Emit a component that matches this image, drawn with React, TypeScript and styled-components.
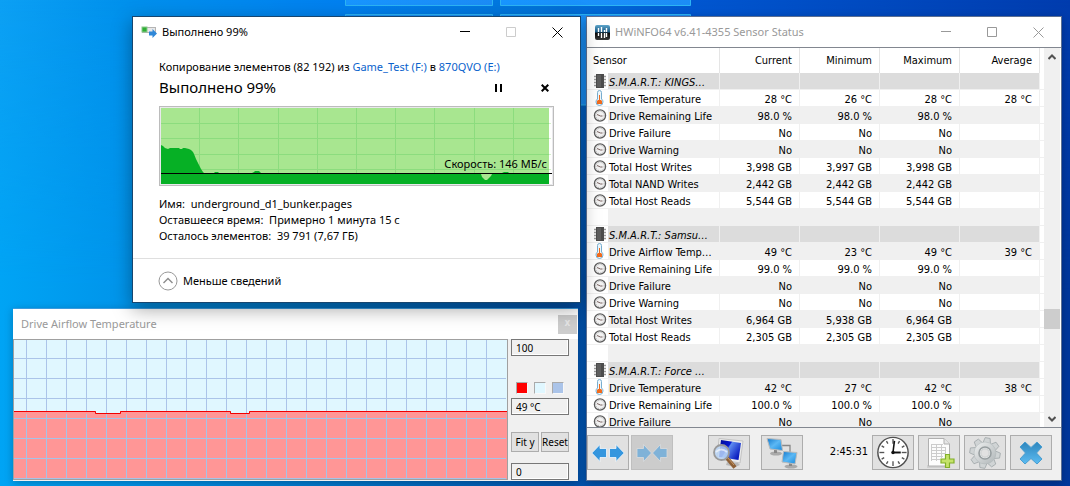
import React from 'react';
import styled, { createGlobalStyle, css } from 'styled-components';

const UI_FONT = '"Segoe UI", "Noto Sans", sans-serif';
const LIST_FONT = 'Tahoma, "DejaVu Sans Condensed", sans-serif';

const GlobalStyle = createGlobalStyle`
  *, *::before, *::after { box-sizing: border-box; }
  body { margin: 0; font: 11px/16px ${UI_FONT}; color: #000; }
  button, input { font: inherit; color: inherit; }
`;

const Desktop = styled.main`
  position: relative;
  isolation: isolate;
  display: grid;
  grid-template-columns: 568px minmax(440px, 1fr);
  gap: 5px;
  height: 100vh;
  min-height: 480px;
  padding: 16px 8px 5px 13px;
  overflow: hidden;
`;

const WallpaperArt = styled.svg`
  position: absolute;
  inset: 0;
  z-index: -1;
  width: 100%;
  height: 100%;
`;

const LeftColumn = styled.div`
  display: flex;
  flex-direction: column;
  gap: 5px;
  min-height: 0;
`;

const Window = styled.section`
  display: flex;
  flex-direction: column;
  min-width: 0;
  min-height: 0;
  background: #fff;
`;

const CopyWindow = styled(Window)`
  position: relative;
  z-index: 2;
  align-self: flex-end;
  width: 449px;
  border: 1px solid #17466f;
  box-shadow: 0 6px 18px rgba(0, 0, 0, 0.36);
`;

const GraphWindow = styled(Window)`
  flex: 1;
  margin-right: 3px;
  border-top: 1px solid #3a9ade;
  box-shadow: 0 2px 8px rgba(0, 0, 0, 0.25);
`;

const SensorWindow = styled(Window)`
  border: 1px solid #5b6f92;
  box-shadow: 0 2px 8px rgba(0, 0, 0, 0.25);
`;

const TitleBar = styled.header<{ $inactive?: boolean }>`
  display: flex;
  flex: none;
  align-items: center;
  height: 30px;
  padding-left: 8px;
  color: ${p => (p.$inactive ? '#999' : '#000')};
`;

const Title = styled.h1`
  flex: 1;
  margin: 0;
  font-size: 11px;
  font-weight: 400;
  white-space: nowrap;
`;

const TitleIcon = styled.svg`
  flex: none;
  margin-right: 5px;
`;

const CaptionButton = styled.button<{ $faded?: boolean }>`
  display: grid;
  place-items: center;
  width: 46px;
  height: 30px;
  padding: 0;
  border: 0;
  background: none;
  color: ${p => (p.$faded ? '#ccc' : 'inherit')};
`;

const CopyBody = styled.div`
  padding: 12px 26px 14px;
`;

const Line = styled.p`
  margin: 0;
  white-space: pre;
`;

const DriveLink = styled.a`
  color: #0a62cc;
  text-decoration: none;
`;

const ProgressRow = styled.div`
  display: flex;
  align-items: center;
  height: 20px;
  margin: 2px 0 9px;
`;

const ProgressTitle = styled.h2`
  flex: 1;
  margin: 0;
  font-size: 15px;
  line-height: 20px;
  font-weight: 400;
`;

const IconButton = styled.button`
  display: grid;
  place-items: center;
  width: 18px;
  height: 20px;
  padding: 2px 0 0;
  border: 0;
  background: none;
  & + & { margin-left: 29px; }
`;

const SpeedChart = styled.div`
  position: relative;
  height: 80px;
  margin-bottom: 10px;
  svg { display: block; width: 100%; height: 100%; }
`;

const SpeedLabel = styled.span`
  position: absolute;
  top: 50px;
  right: 7px;
`;

const CopyFooter = styled.footer`
  display: flex;
  align-items: center;
  height: 44px;
  padding: 1px 0 0 25px;
  border-top: 1px solid #dfdfdf;
`;

const DetailsButton = styled.button`
  display: flex;
  align-items: center;
  gap: 5px;
  padding: 0;
  border: 0;
  background: none;
`;

const GraphClose = styled.button`
  width: 19px;
  height: 19px;
  margin-right: 1px;
  padding: 0 0 2px;
  border: 0;
  background: #cdcdcd;
  color: #e6e6e6;
  font: bold 10px/16px ${LIST_FONT};
`;

const GraphBody = styled.div`
  display: flex;
  flex: 1;
  min-height: 0;
  padding-bottom: 1px;
  background: #f0f0f0;
`;

const Plot = styled.svg`
  flex: 1;
  min-width: 0;
  height: 100%;
`;

const GraphPanel = styled.div`
  display: flex;
  flex-direction: column;
  justify-content: space-between;
  width: 70px;
  padding: 0 9px 0 3px;
  font-size: 10px;
`;

const PanelGroup = styled.div`
  display: flex;
  flex-direction: column;
  gap: 4px;
  margin-top: 15px;
`;

const ButtonPair = styled.div`
  display: flex;
  gap: 2px;
  margin-top: 6px;
`;

const ValueBox = styled.input`
  width: 58px;
  height: 17px;
  padding: 0 4px;
  border: 1px solid #777;
  background: #f0f0f0;
  box-shadow: inset -1px -1px #fff;
  line-height: 15px;
`;

const Swatches = styled.div`
  display: flex;
  gap: 6px;
  padding-left: 5px;
`;

const Swatch = styled.button<{ $color: string }>`
  width: 12px;
  height: 12px;
  padding: 0;
  border: 1px solid #aaa;
  border-right-color: #f8f8f8;
  border-bottom-color: #f8f8f8;
  background: ${p => p.$color};
`;

const SmallButton = styled.button`
  flex: 1;
  height: 20px;
  padding: 0;
  border: 1px solid #adadad;
  background: #e1e1e1;
  line-height: 16px;
`;

const ListArea = styled.div`
  display: flex;
  flex: 1;
  min-height: 0;
  border-top: 1px solid #828790;
  border-bottom: 1px solid #828790;
  overflow: hidden;
  font: 11px/16px ${LIST_FONT};
`;

const TableClip = styled.div`
  flex: 1;
  min-width: 0;
  overflow: hidden;
`;

const SensorTable = styled.table`
  width: 100%;
  table-layout: fixed;
  border-collapse: separate;
  border-spacing: 0;
`;

const IconCol = styled.col` width: 21px; `;
const NameCol = styled.col` width: 112px; `;
const EndCol = styled.col` width: 4px; `;

const HeadCell = styled.th<{ $left?: boolean }>`
  height: 25px;
  padding: ${p => (p.$left ? '1px 0 0 6px' : '1px 7px 0 0')};
  border-right: 1px solid #e5e5e5;
  font-weight: 400;
  text-align: ${p => (p.$left ? 'left' : 'right')};
`;

const cell = css`
  height: 17px;
  padding: 0;
  border-bottom: 1px solid #f0f0f0;
  white-space: nowrap;
`;

const IconCell = styled.td`
  ${cell}
  padding-left: 6px;
  svg { display: block; overflow: visible; }
`;

const EndCell = styled.td` ${cell} `;

const NameCell = styled.td`
  ${cell}
  padding: 4px 0 0 1px;
  border-right: 1px solid #f0f0f0;
  line-height: 12px;
  overflow: hidden;
`;

const ValueCell = styled.td`
  ${cell}
  padding: 4px 7px 0 0;
  border-right: 1px solid #f0f0f0;
  line-height: 12px;
  text-align: right;
`;

const SensorRow = styled.tr<{ $tone: 'group' | 'odd' | 'even' }>`
  ${NameCell}, ${ValueCell} {
    background: ${p => ({ group: '#dcdcdc', odd: '#fff', even: '#f0f0f0' })[p.$tone]};
    font-style: ${p => (p.$tone === 'group' ? 'italic' : 'normal')};
  }
`;

const ScrollTrack = styled.div`
  display: flex;
  flex-direction: column;
  flex: none;
  width: 16px;
  margin-right: 1px;
  background: #f0f0f0;
`;

const ScrollArrow = styled.button`
  display: grid;
  place-items: center;
  height: 17px;
  padding: 0;
  border: 0;
  background: none;
`;

const ScrollSpace = styled.div<{ $grow: number }>` flex: ${p => p.$grow}; `;
const ScrollThumb = styled.div` height: 20px; background: #cdcdcd; `;

const Toolbar = styled.footer`
  display: flex;
  flex: none;
  height: 52px;
  padding: 7px 9px 0 0;
  background: #f0f0f0;
`;

const ToolGroup = styled.div<{ $gap: number; $offset?: string }>`
  display: flex;
  gap: ${p => p.$gap}px;
  margin-left: ${p => p.$offset ?? '0'};
`;

const ToolButton = styled.button`
  display: grid;
  place-items: center;
  width: 42px;
  height: 35px;
  padding: 0;
  border: 1px solid #adadad;
  background: #e1e1e1;
  &:disabled { background: #ccc; border-color: #bfbfbf; }
`;

const Clock = styled.time`
  font: 11px/34px ${LIST_FONT};
`;

function Wallpaper() {
  return (
    <WallpaperArt viewBox="0 0 1070 486" preserveAspectRatio="none" aria-hidden="true">
      <defs>
        <linearGradient id="sky">
          <stop offset="0" stopColor="#0ca0f4" />
          <stop offset=".12" stopColor="#0090ec" />
          <stop offset=".33" stopColor="#0080f0" />
          <stop offset=".5" stopColor="#0076dc" />
          <stop offset=".65" stopColor="#0056d0" />
          <stop offset="1" stopColor="#003cae" />
        </linearGradient>
        <linearGradient id="ground">
          <stop offset="0" stopColor="#00a4f4" />
          <stop offset=".12" stopColor="#0094ea" />
          <stop offset=".33" stopColor="#0074c8" />
          <stop offset=".54" stopColor="#0052ac" />
          <stop offset="1" stopColor="#00379c" />
        </linearGradient>
        <linearGradient id="fade" x2="0" y2="1">
          <stop offset="0" stopColor="#fff" stopOpacity="0" />
          <stop offset=".6" stopColor="#fff" />
        </linearGradient>
        <linearGradient id="pane" x2="1">
          <stop offset="0" stopColor="#1896ff" />
          <stop offset="1" stopColor="#1c8cf6" />
        </linearGradient>
        <mask id="lower"><rect width="1070" height="486" fill="url(#fade)" /></mask>
      </defs>
      <rect width="1070" height="486" fill="url(#sky)" />
      <rect width="1070" height="486" fill="url(#ground)" mask="url(#lower)" />
      <g fill="url(#pane)" stroke="#2cb4f4" strokeWidth="1">
        <path d="M345.500-2V5.500H492.500V-2Z" />
        <path d="M500.500-2V5.500H690.500V-2Z" />
        <path d="M345.500 200V14.500H492.500V200Z" />
        <path d="M500.500 105V14.500H690.500V105Z" />
      </g>
    </WallpaperArt>
  );
}

function CaptionButtons({ maxFaded }: { maxFaded?: boolean }) {
  return (
    <>
      <CaptionButton aria-label="Minimize">
        <svg width="10" height="10"><path d="M0 4.500H10" stroke="currentColor" /></svg>
      </CaptionButton>
      <CaptionButton aria-label="Maximize" $faded={maxFaded}>
        <svg width="10" height="10"><path d="M.5.5h9v9h-9z" fill="none" stroke="currentColor" /></svg>
      </CaptionButton>
      <CaptionButton aria-label="Close">
        <svg width="11" height="11"><path d="M.5.5l10 10M10.500.5l-10 10" stroke="currentColor" /></svg>
      </CaptionButton>
    </>
  );
}

function SpeedPlot() {
  const columns = [40, 79, 119, 158, 197, 236, 275, 315, 354];
  const rows = [17, 32, 48, 63];
  return (
    <svg viewBox="0 0 395 80" preserveAspectRatio="none" aria-hidden="true">
      <rect x=".5" y=".5" width="394" height="79" fill="#fff" stroke="#bcbcbc" />
      <path d="M1.500 78.500V1.500H393.500V78.500Z" fill="none" stroke="#e9e9ec" />
      <rect x="2" y="2" width="388" height="76" fill="#a8e690" />
      {rows.map(y => <path key={y} d={`M390 ${y}.5H392`} stroke="#d3f2c8" />)}
      {rows.map(y => <path key={y} d={`M2 ${y}.5H390`} stroke="#8cdc7e" />)}
      {columns.map(x => <path key={x} d={`M${x}.5 2V78`} stroke="#8cdc7e" />)}
      <path
        d="M2 78V39l2 1 2 2 3 1 2-1h9l1 1h2l1-1h2l4 1 2 1 2 2 1 2 2 5 3 6 2 4 2 3 1 1H55l1-1h3l1 1H93l2-1 1-1h4l1 1 1 1H343l2-1h4l1 1H390V78Z"
        fill="#06b025"
      />
      <path d="M322 68h11l-1 2-4 4h-2l-3-3Z" fill="#a8e690" />
      <path d="M2 67.500H393" stroke="#000" />
    </svg>
  );
}

function TemperaturePlot() {
  const xs = Array.from({ length: 24 }, (_, i) => 13 + i * 20);
  const ys = Array.from({ length: 7 }, (_, i) => 19 + i * 20);
  return (
    <Plot viewBox="0 0 495 141" preserveAspectRatio="none" role="img" aria-label="Drive Airflow Temperature">
      <rect x=".5" y=".5" width="494" height="140" fill="#e0f7ff" />
      {xs.map(x => <path key={x} d={`M${x}.5 1V140`} stroke="#abc4e9" />)}
      {ys.map(y => <path key={y} d={`M1 ${y}.5H493`} stroke="#abc4e9" />)}
      <path d="M1 140V72H83V74H107V72H218V74H236V72H494V140Z" fill="#ff9696" />
      {xs.map(x => <path key={x} d={`M${x}.5 75V140`} stroke="#a5c3e8" />)}
      {ys.slice(3).map(y => <path key={y} d={`M1 ${y}.5H493`} stroke="#a5c3e8" />)}
      <path d="M1 72.500H82.500V74.500H107.500V72.500H217.500V74.500H236.500V72.500H494" fill="none" stroke="#f00000" />
      <rect x=".5" y=".5" width="494" height="140" fill="none" stroke="#a0a0a0" />
    </Plot>
  );
}

type IconKind = 'chip' | 'thermometer' | 'gauge';

function SensorIcon({ kind }: { kind: IconKind }) {
  if (kind === 'chip') {
    return (
      <svg width="14" height="16" viewBox="0 -1 14 16" aria-hidden="true">
        <path d="M1 2.500h12M1 5.500h12M1 8.500h12M1 11.500h12" stroke="#9a9a9a" strokeWidth="1.600" />
        <rect x="3" y="0" width="8" height="14" fill="#4c4c4c" />
        <path d="M4 1h4v12H4z" fill="#5e5e5e" />
      </svg>
    );
  }
  if (kind === 'thermometer') {
    return (
      <svg width="14" height="16" viewBox="0 0 14 16" aria-hidden="true">
        <path d="M4.500 9V2.500q0-2 2-2t2 2V9q1.500 1 1.500 3 0 3.500-3.500 3.500T3 12q0-2 1.500-3Z" fill="#eef7fc" stroke="#78aed0" />
        <path d="M6 5h1v5h1l1 1v3H4v-3l1-1h1Z" fill="#f26b1d" />
      </svg>
    );
  }
  return (
    <svg width="14" height="16" viewBox="0 -1 14 16" aria-hidden="true">
      <circle cx="7" cy="7.500" r="5.600" fill="#f2f2f2" stroke="#5c5c5c" strokeWidth="1.300" />
      <circle cx="7" cy="7.500" r="4.200" fill="none" stroke="#aaa" strokeDasharray="1 1.500" />
      <path d="M4 6.500l3.500 1.500h2" fill="none" stroke="#7b6563" />
    </svg>
  );
}

type Row = { icon?: IconKind; name: string; values?: string[] };

const temp = (name: string, ...values: string[]): Row => ({ icon: 'thermometer', name, values });
const stat = (name: string, ...values: string[]): Row => ({ icon: 'gauge', name, values });
const group = (name: string): Row => ({ icon: 'chip', name });
const blank: Row = { name: '' };

const rows: Row[] = [
  group('S.M.A.R.T.: KINGS…'),
  temp('Drive Temperature', '28 °C', '26 °C', '28 °C', '28 °C'),
  stat('Drive Remaining Life', '98.0 %', '98.0 %', '98.0 %'),
  stat('Drive Failure', 'No', 'No', 'No'),
  stat('Drive Warning', 'No', 'No', 'No'),
  stat('Total Host Writes', '3,998 GB', '3,997 GB', '3,998 GB'),
  stat('Total NAND Writes', '2,442 GB', '2,442 GB', '2,442 GB'),
  stat('Total Host Reads', '5,544 GB', '5,544 GB', '5,544 GB'),
  blank,
  group('S.M.A.R.T.: Samsu…'),
  temp('Drive Airflow Temp…', '49 °C', '23 °C', '49 °C', '39 °C'),
  stat('Drive Remaining Life', '99.0 %', '99.0 %', '99.0 %'),
  stat('Drive Failure', 'No', 'No', 'No'),
  stat('Drive Warning', 'No', 'No', 'No'),
  stat('Total Host Writes', '6,964 GB', '5,938 GB', '6,964 GB'),
  stat('Total Host Reads', '2,305 GB', '2,305 GB', '2,305 GB'),
  blank,
  group('S.M.A.R.T.: Force …'),
  temp('Drive Temperature', '42 °C', '27 °C', '42 °C', '38 °C'),
  stat('Drive Remaining Life', '100.0 %', '100.0 %', '100.0 %'),
  stat('Drive Failure', 'No', 'No', 'No'),
];

function SensorList() {
  return (
    <SensorTable>
      <colgroup>
        <IconCol />
        <NameCol />
        <col />
        <col />
        <col />
        <col />
        <EndCol />
      </colgroup>
      <thead>
        <tr>
          <HeadCell colSpan={2} scope="col" $left>Sensor</HeadCell>
          {['Current', 'Minimum', 'Maximum', 'Average'].map(label => (
            <HeadCell key={label} scope="col">{label}</HeadCell>
          ))}
          <td />
        </tr>
      </thead>
      <tbody>
        {rows.map((row, index) => (
          <SensorRow key={index} $tone={row.icon === 'chip' ? 'group' : index % 2 ? 'odd' : 'even'}>
            <IconCell>{row.icon && <SensorIcon kind={row.icon} />}</IconCell>
            <NameCell>{row.name}</NameCell>
            {[0, 1, 2, 3].map(i => <ValueCell key={i}>{row.values?.[i]}</ValueCell>)}
            <EndCell />
          </SensorRow>
        ))}
      </tbody>
    </SensorTable>
  );
}

function ExpandIcon() {
  return (
    <svg width="34" height="20" aria-hidden="true">
      <g fill="#3596de" stroke="#f4f8fb" strokeWidth=".8">
        <path d="M.8 10L9 1.500V5.500H15.500v9H9v4Z" />
        <path d="M33.200 10L25 1.500V5.500H18.500v9H25v4Z" />
      </g>
    </svg>
  );
}

function CollapseIcon() {
  return (
    <svg width="34" height="20" aria-hidden="true">
      <g fill="#7fb2d8" stroke="#dcdcdc" strokeWidth=".8">
        <path d="M16.500 10L8.500 1.500V5.500H2v9h6.500v4Z" />
        <path d="M17.500 10L25.500 1.500V5.500H32v9h-6.500v4Z" />
      </g>
    </svg>
  );
}

function InspectIcon() {
  return (
    <svg width="34" height="32" aria-hidden="true">
      <defs>
        <linearGradient id="scr" x2="1" y2=".6">
          <stop offset="0" stopColor="#000a90" />
          <stop offset=".45" stopColor="#0618d0" />
          <stop offset=".5" stopColor="#5f8cf0" />
          <stop offset="1" stopColor="#0a1cc0" />
        </linearGradient>
      </defs>
      <path d="M15 25l11 1 2 2-5 2-9-2Z" fill="#b8b8b8" />
      <path d="M7 1.500L31 4l-3 22L5 22Z" fill="#ececec" stroke="#c4c4c4" />
      <path d="M9 3l20 3-2.500 17L7 20Z" fill="url(#scr)" />
      <path d="M15 21l8 9.500" stroke="#8e6036" strokeWidth="4" />
      <path d="M16 21l6 7" stroke="#c89a68" strokeWidth="1" />
      <circle cx="9.500" cy="15.500" r="7.500" fill="#b8d4f4" fillOpacity=".85" stroke="#999" strokeWidth="1.800" />
      <path d="M4 15q5-5 11 0" fill="none" stroke="#fff" strokeWidth="2" opacity=".6" />
    </svg>
  );
}

function NetworkIcon() {
  return (
    <svg width="34" height="32" aria-hidden="true">
      <defs>
        <linearGradient id="net" x2="1" y2="1">
          <stop offset="0" stopColor="#1278cc" />
          <stop offset=".5" stopColor="#5cb8f4" />
          <stop offset="1" stopColor="#1688dc" />
        </linearGradient>
      </defs>
      <path d="M17 8.500h8V15" fill="none" stroke="#888" strokeWidth="1.300" />
      <ellipse cx="11" cy="16.500" rx="6" ry="2" fill="#aaa" />
      <path d="M9 12h3v4H9z" fill="#888" />
      <path d="M2 1.500l14 1 1.500 11L5 12Z" fill="url(#net)" stroke="#bbb" />
      <ellipse cx="26" cy="29.500" rx="6.500" ry="2" fill="#aaa" />
      <path d="M24 25h3v4h-3z" fill="#888" />
      <path d="M18.500 14.500l13.500 1-2 11.500-13-2Z" fill="url(#net)" stroke="#bbb" />
    </svg>
  );
}

function ClockIcon() {
  const ticks = Array.from({ length: 12 }, (_, i) => i * 30);
  return (
    <svg width="34" height="33" viewBox="0 0 34 34" aria-hidden="true">
      <circle cx="17" cy="17" r="15.600" fill="#fff" stroke="#505050" strokeWidth="1.500" />
      {ticks.map(a => (
        <path key={a} d={a % 90 ? 'M17 3.500v3' : 'M17 3v5'} stroke="#555" strokeWidth="1.400" transform={`rotate(${a} 17 17)`} />
      ))}
      <path d="M17 17l1.500-12" stroke="#111" strokeWidth="1.600" />
      <path d="M16 17h9" stroke="#111" strokeWidth="2" />
      <circle cx="17" cy="17" r="1.800" fill="#111" />
    </svg>
  );
}

function ReportIcon() {
  return (
    <svg width="34" height="32" aria-hidden="true">
      <path d="M5 28h19v3H5z" fill="#cfcfcf" />
      <path d="M6.500 1.500H22L27.500 7v22h-21Z" fill="#fcfcfc" stroke="#b0b0b0" />
      <path d="M22 1.500V7h5.500" fill="#e6e6e6" stroke="#b0b0b0" />
      <path d="M9 7.500h12M9 10.500h15M9 13.500h15M9 16.500h15M9 19.500h12M9 22.500h9M9.500 7v17M14.500 7v17M19.500 7v14M23.500 10v8" fill="none" stroke="#cccccc" />
      <path d="M23.500 17.500h4v4.500h4.500v4h-4.500v4.500h-4V26H19v-4h4.500Z" fill="#c5e36a" stroke="#82b029" strokeWidth="1.200" />
    </svg>
  );
}

function GearIcon() {
  const teeth = Array.from({ length: 8 }, (_, i) => i * 45 + 10);
  return (
    <svg width="34" height="32" viewBox="0 0 34 32" aria-hidden="true">
      <defs>
        <linearGradient id="steel" x2="1" y2="1">
          <stop offset="0" stopColor="#eef0f0" />
          <stop offset="1" stopColor="#b0b6b8" />
        </linearGradient>
      </defs>
      {teeth.map(a => (
        <path key={a} d="M13 7L14.500 .8h5L21 7Z" fill="#d0d4d5" stroke="#a2a9ab" strokeWidth=".8" transform={`rotate(${a} 17 16)`} />
      ))}
      <circle cx="17" cy="16" r="11" fill="url(#steel)" stroke="#b2b8ba" strokeWidth=".6" />
      <circle cx="17" cy="16" r="6" fill="#eceeee" stroke="#979ea0" strokeWidth="1.600" />
      <circle cx="17" cy="16" r="4.200" fill="#e1e1e1" stroke="#c9cdce" />
    </svg>
  );
}

function CrossIcon() {
  return (
    <svg width="26" height="26" aria-hidden="true">
      <defs>
        <linearGradient id="cross" x2="0" y2="1">
          <stop offset="0" stopColor="#2e86bd" />
          <stop offset="1" stopColor="#5cbcf2" />
        </linearGradient>
      </defs>
      <path
        d="M7 2l6 5.500L19 2l5 5-5.500 6 5.500 6-5 5-6-5.500L7 24l-5-5 5.500-6L2 7Z"
        fill="url(#cross)" stroke="#4a9ed0" strokeWidth="1" strokeLinejoin="round"
      />
    </svg>
  );
}

function CopyDialog() {
  return (
    <CopyWindow>
      <TitleBar>
        <TitleIcon width="16" height="12" aria-hidden="true">
          <rect x="1.500" y="1.500" width="13" height="5" fill="#e8e8e8" stroke="#b4b4b4" />
          <rect x="1" y="1" width="5" height="5" fill="#2fae35" stroke="#8ac88c" />
          <path d="M8 5.500h3.500V3L16 7.500 11.500 12V9.500H8Z" fill="#2f88d8" />
        </TitleIcon>
        <Title>Выполнено 99%</Title>
        <CaptionButtons maxFaded />
      </TitleBar>
      <CopyBody>
        <Line>
          Копирование элементов (82 192) из <DriveLink href="#source">Game_Test (F:)</DriveLink> в{' '}
          <DriveLink href="#target">870QVO (E:)</DriveLink>
        </Line>
        <ProgressRow>
          <ProgressTitle>Выполнено 99%</ProgressTitle>
          <IconButton aria-label="Пауза">
            <svg width="8" height="8"><path d="M2 0v8M7 0v8" stroke="#000" strokeWidth="2" /></svg>
          </IconButton>
          <IconButton aria-label="Отмена">
            <svg width="8" height="8"><path d="M.7.700l6.600 6.600M7.300.7L.7 7.300" stroke="#000" strokeWidth="2" /></svg>
          </IconButton>
        </ProgressRow>
        <SpeedChart>
          <SpeedPlot />
          <SpeedLabel>Скорость: 146 МБ/с</SpeedLabel>
        </SpeedChart>
        <Line>{'Имя:  underground_d1_bunker.pages'}</Line>
        <Line>{'Оставшееся время:  Примерно 1 минута 15 с'}</Line>
        <Line>{'Осталось элементов:  39 791 (7,67 ГБ)'}</Line>
      </CopyBody>
      <CopyFooter>
        <DetailsButton>
          <svg width="20" height="20" aria-hidden="true">
            <circle cx="10" cy="10" r="9" fill="none" stroke="#999" />
            <path d="M5.500 12L10 7.500l4.500 4.500" fill="none" stroke="#8c8c8c" strokeWidth="1.400" />
          </svg>
          Меньше сведений
        </DetailsButton>
      </CopyFooter>
    </CopyWindow>
  );
}

function TemperatureGraph() {
  return (
    <GraphWindow>
      <TitleBar $inactive>
        <Title>Drive Airflow Temperature</Title>
        <GraphClose aria-label="Close">x</GraphClose>
      </TitleBar>
      <GraphBody>
        <TemperaturePlot />
        <GraphPanel>
          <ValueBox aria-label="Upper limit" defaultValue="100" />
          <PanelGroup>
            <Swatches>
              <Swatch $color="#f00" aria-label="Line color" />
              <Swatch $color="#e0f7ff" aria-label="Background color" />
              <Swatch $color="#abc4e9" aria-label="Grid color" />
            </Swatches>
            <ValueBox aria-label="Current value" defaultValue="49 °C" readOnly />
          </PanelGroup>
          <ButtonPair>
            <SmallButton>Fit y</SmallButton>
            <SmallButton>Reset</SmallButton>
          </ButtonPair>
          <ValueBox aria-label="Lower limit" defaultValue="0" />
        </GraphPanel>
      </GraphBody>
    </GraphWindow>
  );
}

function SensorStatus() {
  return (
    <SensorWindow>
      <TitleBar $inactive>
        <TitleIcon width="15" height="15" aria-hidden="true">
          <defs>
            <linearGradient id="logo" x2="0" y2="1">
              <stop offset="0" stopColor="#5ea6cc" />
              <stop offset=".45" stopColor="#1c5a84" />
              <stop offset=".55" stopColor="#0a0a0a" />
              <stop offset="1" stopColor="#3a3a3a" />
            </linearGradient>
          </defs>
          <rect width="15" height="15" rx="2" fill="url(#logo)" />
          <path d="M3.500 3v4M6.500 2v5M9.500 5v2M11.500 3v4M3.500 8v3M6.500 8v5M9.500 8v5M11.500 8v4" stroke="#fff" strokeWidth="1.400" />
        </TitleIcon>
        <Title>HWiNFO64 v6.41-4355 Sensor Status</Title>
        <CaptionButtons />
      </TitleBar>
      <ListArea>
        <TableClip>
          <SensorList />
        </TableClip>
        <ScrollTrack>
          <ScrollArrow aria-label="Scroll up">
            <svg width="8" height="6"><path d="M.5 5L4 1.500 7.500 5" fill="none" stroke="#505050" strokeWidth="2" /></svg>
          </ScrollArrow>
          <ScrollSpace $grow={3} />
          <ScrollThumb />
          <ScrollSpace $grow={1} />
          <ScrollArrow aria-label="Scroll down">
            <svg width="8" height="6"><path d="M.5 1L4 4.500 7.500 1" fill="none" stroke="#505050" strokeWidth="2" /></svg>
          </ScrollArrow>
        </ScrollTrack>
      </ListArea>
      <Toolbar>
        <ToolGroup $gap={2}>
          <ToolButton aria-label="Expand columns"><ExpandIcon /></ToolButton>
          <ToolButton aria-label="Collapse columns" disabled><CollapseIcon /></ToolButton>
        </ToolGroup>
        <ToolGroup $gap={11} $offset="35px">
          <ToolButton aria-label="Inspect"><InspectIcon /></ToolButton>
          <ToolButton aria-label="Remote monitoring"><NetworkIcon /></ToolButton>
        </ToolGroup>
        <ToolGroup $gap={4} $offset="auto">
          <Clock>2:45:31</Clock>
          <ToolButton aria-label="Reset clock"><ClockIcon /></ToolButton>
          <ToolButton aria-label="Start logging"><ReportIcon /></ToolButton>
          <ToolButton aria-label="Settings"><GearIcon /></ToolButton>
          <ToolButton aria-label="Close sensors"><CrossIcon /></ToolButton>
        </ToolGroup>
      </Toolbar>
    </SensorWindow>
  );
}

export default function App() {
  return (
    <>
      <GlobalStyle />
      <Desktop>
        <Wallpaper />
        <LeftColumn>
          <CopyDialog />
          <TemperatureGraph />
        </LeftColumn>
        <SensorStatus />
      </Desktop>
    </>
  );
}
